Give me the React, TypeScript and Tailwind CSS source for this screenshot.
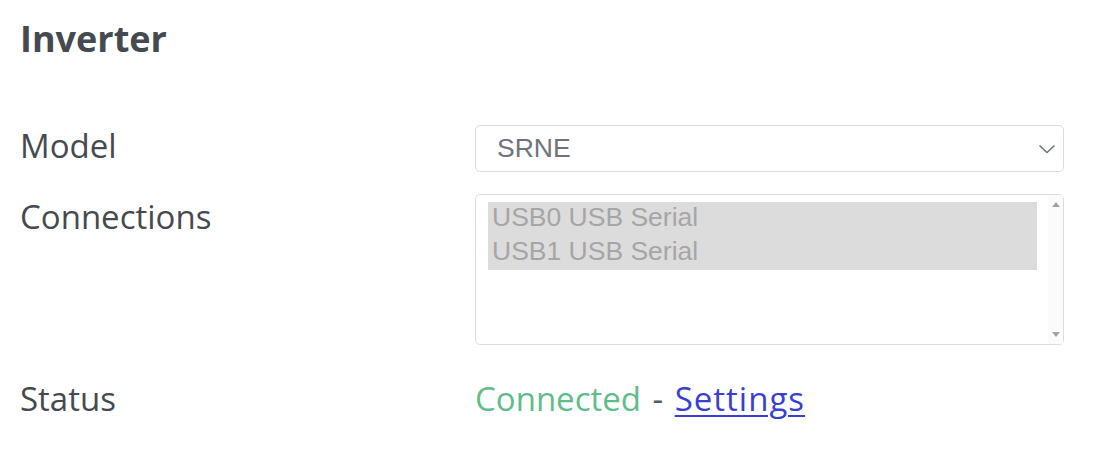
import React from "react";

export default function App() {
  return (
    <div className="min-h-screen bg-white pl-5 pt-[19px] font-['Open_Sans',sans-serif] text-[#464a50]">
      <h1 className="text-[36px] font-bold leading-[40px] text-[#454950]">Inverter</h1>

      <div className="mt-[66px] grid grid-cols-[455px_589px]">
        {/* Model */}
        <div className="pt-[1px] text-[33px] leading-[40px]">Model</div>
        <div className="flex h-[47px] items-center justify-between rounded-[5px] border border-[#dcdcdc] pl-[21px] pr-[7px] font-['Liberation_Sans',Arial,sans-serif] text-[26.5px] text-[#6f737a]">
          <span>SRNE</span>
          <svg width="18" height="10" viewBox="0 0 18 10">
            <path d="M1.5 1.5 L9 8.5 L16.5 1.5" fill="none" stroke="#6f737a" strokeWidth="1.6" />
          </svg>
        </div>

        {/* Connections */}
        <div className="mt-[22px] pt-[3px] text-[33px] leading-[40px]">Connections</div>
        <div className="mt-[22px] flex h-[151px] rounded-[5px] border border-[#dcdcdc] pl-[12px] pt-[7px] font-['Liberation_Sans',Arial,sans-serif] text-[26.5px] text-[#a6a6a6]">
          <div className="flex-1">
            <div className="h-[34px] bg-[#dcdcdc] pl-[4px] leading-[30px]">USB0 USB Serial</div>
            <div className="h-[34px] bg-[#dcdcdc] pl-[4px] leading-[30px]">USB1 USB Serial</div>
          </div>
          <div className="-mt-[7px] ml-[11px] flex w-[15px] flex-col items-center justify-between bg-[#fbfbfb] pb-[7px] pt-[7px]">
            <svg width="8" height="5" viewBox="0 0 8 5">
              <path d="M0 5 L4 0 L8 5 Z" fill="#a3a3a3" />
            </svg>
            <svg width="8" height="5" viewBox="0 0 8 5">
              <path d="M0 0 L4 5 L8 0 Z" fill="#a3a3a3" />
            </svg>
          </div>
        </div>

        {/* Status */}
        <div className="mt-[34px] text-[33px] leading-[40px]">Status</div>
        <div className="mt-[34px] text-[33px] leading-[40px]">
          <span className="text-[#5ebd8a]">Connected</span>
          <span className="mx-[3px] text-[#555a60]"> - </span>
          <a href="#" className="tracking-[1px] text-[#3a3fcf] underline decoration-[2px] underline-offset-[4px]">
            Settings
          </a>
        </div>
      </div>
    </div>
  );
}
